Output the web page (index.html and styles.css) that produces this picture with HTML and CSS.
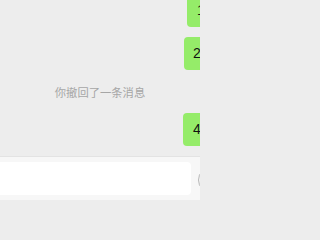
FILE: index.html
```html
<!DOCTYPE html>
<html lang="zh-CN">
<head>
<meta charset="utf-8">
<link rel="stylesheet" href="styles.css">
</head>
<body>
<div class="app">
  <div class="chat">
    <div class="row row-1"><div class="bubble">1</div></div>
    <div class="row row-2"><div class="bubble">2</div></div>
    <div class="system">你撤回了一条消息</div>
    <div class="row row-4"><div class="bubble">4</div></div>
  </div>
  <div class="footer">
    <div class="input"></div>
    <div class="icon"></div>
  </div>
</div>
</body>
</html>
```
FILE: styles.css
```css
html, body {
  margin: 0;
  padding: 0;
  width: 200px;
  height: 200px;
  overflow: hidden;
  background: #ededed;
  font-family: "Liberation Sans", "Noto Sans CJK SC", sans-serif;
}
.app {
  width: 200px;
  height: 200px;
  display: flex;
  flex-direction: column;
  overflow: hidden;
}
.chat {
  height: 156px;
  flex: none;
  display: flex;
  flex-direction: column;
  overflow: hidden;
}
.row {
  display: flex;
  width: 200px;
  flex: none;
  overflow: hidden;
}
.row-1 { margin-top: -6px; padding-left: 187px; }
.row-2 { margin-top: 10px; padding-left: 184px; }
.row-4 { margin-top: 13px; padding-left: 183px; }
.row-1, .row-2, .row-4 { box-sizing: border-box; }
.bubble {
  background: #95ec69;
  border-radius: 4px;
  height: 33px;
  box-sizing: border-box;
  padding: 6px 30px 6px 10px;
  font-size: 14px;
  line-height: 21px;
  color: #111;
  flex: none;
}
.row-2 .bubble { padding-left: 9px; }
.system {
  margin-top: 14px;
  text-align: center;
  font-family: "Noto Sans CJK SC", sans-serif;
  font-size: 11.3px;
  line-height: 16px;
  color: #a6a6a6;
}
.footer {
  flex: 1;
  border-top: 1px solid #e3e3e3;
  background: #f7f7f7;
  display: flex;
  align-items: flex-start;
  padding-top: 5px;
  gap: 7px;
  overflow: hidden;
}
.input {
  width: 191px;
  height: 33px;
  background: #fff;
  border-radius: 0 4px 4px 0;
  flex: none;
}
.icon {
  width: 24px;
  height: 24px;
  border: 1px solid #b5b5b5;
  border-radius: 50%;
  flex: none;
  margin-top: 5px;
}
```
